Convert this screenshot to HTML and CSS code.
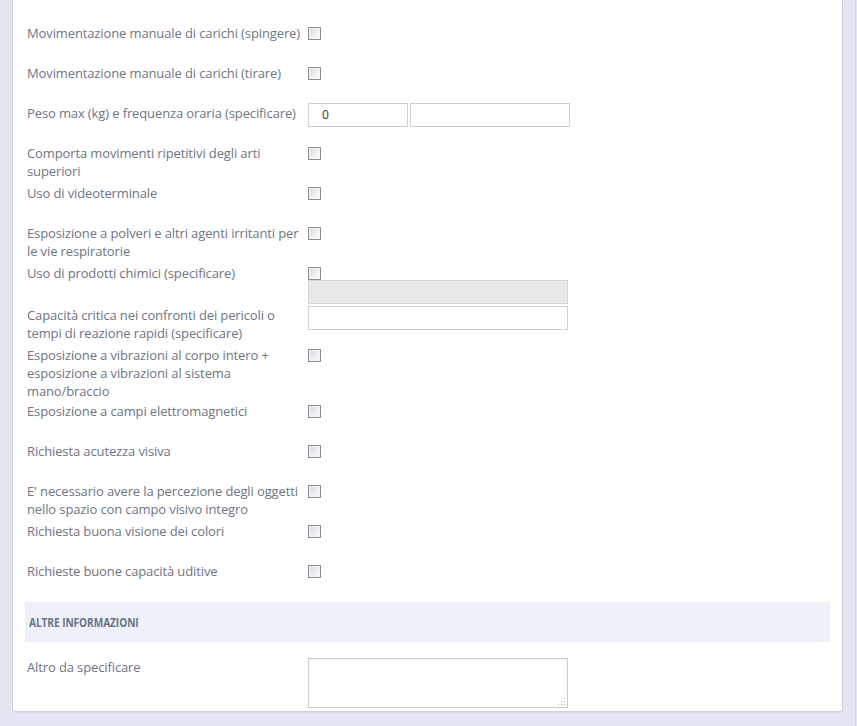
FILE: index.html
```html
<!DOCTYPE html>
<html lang="it">
<head>
<meta charset="utf-8">
<title>Modulo</title>
<link rel="stylesheet" href="styles.css">
</head>
<body>
<div class="page">
  <div class="panel">
    <div class="row"><div class="lbl">Movimentazione manuale di carichi (spingere)</div><div class="ctl"><span class="cb"></span></div></div>
    <div class="row"><div class="lbl">Movimentazione manuale di carichi (tirare)</div><div class="ctl"><span class="cb"></span></div></div>
    <div class="row"><div class="lbl">Peso max (kg) e frequenza oraria (specificare)</div><div class="ctl inputs"><span class="inp w100">0</span><span class="inp w160"></span></div></div>
    <div class="row"><div class="lbl">Comporta movimenti ripetitivi degli arti superiori</div><div class="ctl"><span class="cb"></span></div></div>
    <div class="row"><div class="lbl">Uso di videoterminale</div><div class="ctl"><span class="cb"></span></div></div>
    <div class="row"><div class="lbl">Esposizione a polveri e altri agenti irritanti per le vie respiratorie</div><div class="ctl"><span class="cb"></span></div></div>
    <div class="row"><div class="lbl">Uso di prodotti chimici (specificare)</div><div class="ctl stack"><span class="cb"></span><span class="inp w260 disabled"></span></div></div>
    <div class="row"><div class="lbl">Capacità critica nei confronti dei pericoli o tempi di reazione rapidi (specificare)</div><div class="ctl"><span class="inp w260 flat"></span></div></div>
    <div class="row"><div class="lbl">Esposizione a vibrazioni al corpo intero + esposizione a vibrazioni al sistema mano/braccio</div><div class="ctl"><span class="cb"></span></div></div>
    <div class="row"><div class="lbl">Esposizione a campi elettromagnetici</div><div class="ctl"><span class="cb"></span></div></div>
    <div class="row"><div class="lbl">Richiesta acutezza visiva</div><div class="ctl"><span class="cb"></span></div></div>
    <div class="row"><div class="lbl">E' necessario avere la percezione degli oggetti nello spazio con campo visivo integro</div><div class="ctl"><span class="cb"></span></div></div>
    <div class="row"><div class="lbl">Richiesta buona visione dei colori</div><div class="ctl"><span class="cb"></span></div></div>
    <div class="row"><div class="lbl">Richieste buone capacità uditive</div><div class="ctl"><span class="cb"></span></div></div>
    <div class="section"><span class="section-title">ALTRE INFORMAZIONI</span></div>
    <div class="row last"><div class="lbl">Altro da specificare</div><div class="ctl"><span class="textarea"><svg class="grip" width="9" height="9" viewBox="0 0 9 9"><rect x="7" y="1" width="1" height="1"/><rect x="7" y="4" width="1" height="1"/><rect x="4" y="4" width="1" height="1"/><rect x="7" y="7" width="1" height="1"/><rect x="4" y="7" width="1" height="1"/><rect x="1" y="7" width="1" height="1"/></svg></span></div></div>
  </div>
</div>
</body>
</html>
```
FILE: styles.css
```css
html, body {
  margin: 0;
  padding: 0;
}
body {
  background: #e4e7f1;
  font-family: "Open Sans", "Liberation Sans", sans-serif;
  font-size: 13px;
  color: #6f7585;
  height: 726px;
  overflow: hidden;
}
.page {
  width: 856px;
  height: 726px;
  border-right: 1px solid #d2d5e1;
  padding-left: 12px;
  box-sizing: border-box;
}
.panel {
  width: 831px;
  box-sizing: border-box;
  background: #fff;
  border: 1px solid #d0d3df;
  border-top: none;
  border-radius: 0 0 3px 3px;
  padding: 24px 12px 0 12px;
  box-shadow: 0 1px 1px rgba(0,0,0,0.04);
}
.row {
  display: grid;
  grid-template-columns: 283px 1fr;
  min-height: 40px;
  padding-bottom: 2px;
  box-sizing: border-box;
}
.lbl {
  padding: 0 4px 0 2px;
  line-height: 18px;
  letter-spacing: -0.12px;
}
.ctl {
  display: flex;
  align-items: flex-start;
}
.ctl.stack {
  flex-direction: column;
  gap: 0;
}
.cb {
  display: block;
  width: 13px;
  height: 13px;
  margin-top: 3px;
  box-sizing: border-box;
  border: 1px solid #8d8d8d;
  background: linear-gradient(135deg, #d5d8de 0%, #eef0f3 60%, #ffffff 100%);
  box-shadow: inset 0 0 0 1px #f4f5f7;
}
.inputs {
  gap: 2px;
  margin-top: -1px;
}
.inp {
  display: block;
  height: 24px;
  box-sizing: border-box;
  border: 1px solid #cfcfcf;
  background: #fff;
  font-size: 12px;
  line-height: 22px;
  padding-left: 13px;
  color: #333;
}
.w100 { width: 100px; }
.w160 { width: 160px; }
.w260 { width: 260px; }
.disabled {
  background: #e9e9e9;
  border-color: #d6d6d6;
}
.section {
  height: 40px;
  background: #eef1f9;
  display: flex;
  align-items: center;
  padding-left: 4px;
}
.section-title {
  display: inline-block;
  font-weight: 700;
  font-size: 13px;
  color: #6b7288;
  transform: scaleX(0.78);
  transform-origin: left center;
  letter-spacing: -0.1px;
}
.row.last {
  padding-top: 16px;
  padding-bottom: 3px;
  min-height: 0;
}
.textarea {
  display: block;
  position: relative;
  width: 260px;
  height: 50px;
  box-sizing: border-box;
  border: 1px solid #cccccc;
  background: #fff;
  box-shadow: inset 0 1px 2px rgba(0,0,0,0.06);
}
.grip {
  position: absolute;
  right: 1px;
  bottom: 1px;
  fill: #a8a8a8;
}
```
